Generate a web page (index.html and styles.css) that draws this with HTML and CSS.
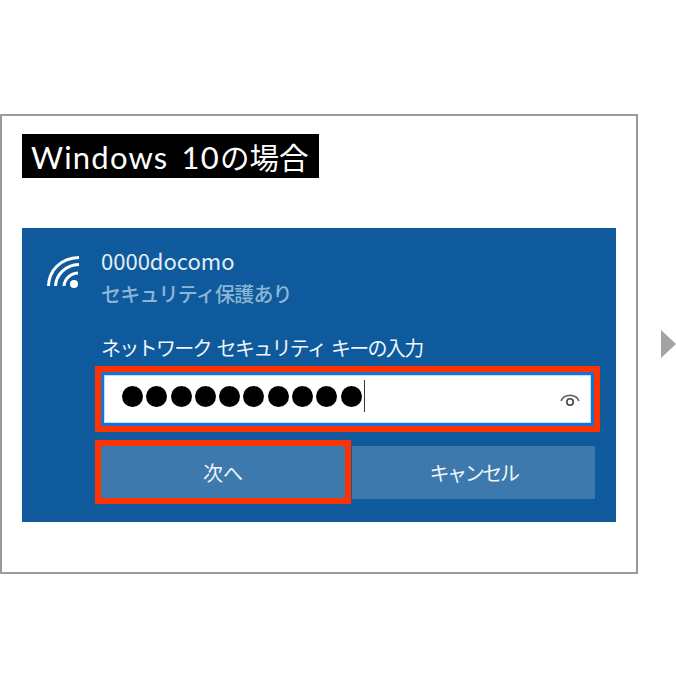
FILE: index.html
```html
<!DOCTYPE html>
<html lang="ja">
<head>
    <meta charset="UTF-8">
    <meta name="viewport" content="width=device-width, initial-scale=1.0">
    <title>Windows 10の場合</title>
    <link rel="stylesheet" href="styles.css">
</head>
<body>
    <div class="page">
        <div class="frame">
            <h2 class="os-label">Windows 10<span class="os-label-ja">の場合</span></h2>
            <div class="panel">
                <div class="network">
                    <svg class="wifi" viewBox="0 0 35 35" fill="none" stroke="#fff" stroke-width="3">
                        <path d="M2.5 31C3 16 14 3 33 2.5"/>
                        <path d="M9.5 31C10 20 19 10 33 9.5"/>
                        <path d="M18 31C18.5 24 24 18.5 32 18"/>
                        <circle cx="28" cy="29" r="4" fill="#fff" stroke="none"/>
                    </svg>
                    <div class="network-text">
                        <div class="ssid">0000docomo</div>
                        <div class="secure">セキュリティ保護あり</div>
                    </div>
                </div>
                <div class="key-label">ネットワーク セキュリティ キーの入力</div>
                <div class="marked key-box">
                    <div class="key-input">
                        <span class="dots">
                            <i></i><i></i><i></i><i></i><i></i><i></i><i></i><i></i><i></i><i></i>
                        </span>
                        <span class="caret"></span>
                        <svg class="eye" viewBox="0 0 20 16" fill="none" stroke="#666" stroke-width="1.6">
                            <path d="M1 9C4 1.5 16 1.5 19 9"/>
                            <circle cx="10" cy="10" r="3.2" stroke="#444"/>
                        </svg>
                    </div>
                </div>
                <div class="buttons">
                    <div class="marked next-box"><div class="btn">次へ</div></div>
                    <div class="btn cancel">キャンセル</div>
                </div>
            </div>
        </div>
        <div class="arrow"></div>
    </div>
</body>
</html>
```

FILE: styles.css
```css
/* General Styles */
body {
    margin: 0;
    background-color: #fff;
    font-family: "Noto Sans CJK JP", "Noto Sans", sans-serif;
    overflow: hidden;
}

.page {
    display: flex;
    align-items: flex-start;
    padding-top: 114px;
    width: 676px;
}

/* Outer Frame */
.frame {
    box-sizing: border-box;
    flex: none;
    width: 638px;
    height: 460px;
    border: 2px solid #9a9a9a;
    padding: 18px 20px;
}

.os-label {
    box-sizing: border-box;
    display: block;
    width: 297px;
    height: 44px;
    margin: 0;
    padding-left: 9px;
    line-height: 44px;
    background-color: #000;
    color: #fff;
    font-family: "Lato", "Noto Sans CJK JP", sans-serif;
    font-size: 31px;
    font-weight: 400;
    letter-spacing: 1.2px;
    word-spacing: 4px;
    white-space: nowrap;
}

.os-label-ja {
    font-family: "Noto Sans CJK JP", sans-serif;
    font-size: 29.5px;
    letter-spacing: 0;
}

.arrow {
    flex: none;
    margin: 216px 0 0 23px;
    width: 0;
    height: 0;
    border-style: solid;
    border-width: 14px 0 14px 15px;
    border-color: transparent transparent transparent #a3a3a3;
}

/* Blue Panel */
.panel {
    box-sizing: border-box;
    width: 594px;
    height: 294px;
    margin-top: 50px;
    padding: 20px 21px 0 73px;
    background-color: #0e5a9c;
    color: #fff;
}

.network {
    display: flex;
    height: 85px;
    margin-left: -49px;
}

.wifi {
    flex: none;
    width: 35px;
    height: 35px;
    margin-top: 7px;
}

.network-text {
    margin: -4px 0 0 20px;
    font-size: 20px;
    line-height: 32px;
    white-space: nowrap;
}

.ssid {
    font-size: 22px;
    color: #e3edf5;
}

.secure {
    margin-top: 2px;
    letter-spacing: -0.8px;
    font-weight: 500;
    color: #8db5d6;
}

.key-label {
    padding-left: 6px;
    font-size: 20px;
    line-height: 30px;
    letter-spacing: -1.7px;
    word-spacing: 3px;
    color: #f0f5fa;
    white-space: nowrap;
}

/* Red Highlight Boxes */
.marked {
    box-sizing: border-box;
    border: 6px solid #ff3300;
}

.key-box {
    width: 505px;
    height: 66px;
    margin-top: 3px;
}

.key-input {
    box-sizing: border-box;
    display: flex;
    align-items: center;
    height: 54px;
    padding: 0 11px 0 18px;
    background-color: #fff;
    border: 3px solid #1273d8;
    box-shadow: inset 0 0 0 1px #c6dcf3;
}

.dots {
    display: flex;
    margin-bottom: 6px;
}

.dots i {
    display: block;
    width: 21px;
    height: 21px;
    margin-right: 3.3px;
    background-color: #000;
    border-radius: 50%;
}

.caret {
    width: 1px;
    height: 32px;
    margin: 0 0 6px -1px;
    background-color: #333;
}

.eye {
    width: 20px;
    height: 16px;
    margin-left: auto;
    margin-top: 2px;
}

/* Buttons */
.buttons {
    display: flex;
    align-items: center;
    margin-top: 8px;
}

.next-box {
    width: 256px;
    height: 64px;
}

.btn {
    display: flex;
    align-items: center;
    justify-content: center;
    height: 52px;
    background-color: #3d79ad;
    color: #f0f5fa;
    font-size: 20px;
}

.cancel {
    width: 243px;
    height: 53px;
    margin-left: 1px;
    letter-spacing: -2.4px;
}
```
